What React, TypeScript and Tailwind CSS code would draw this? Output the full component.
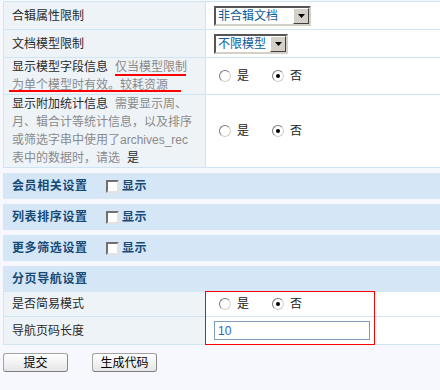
import React from "react";

const Radio = ({ checked }: { checked?: boolean }) => (
  <span className="flex h-[12px] w-[12px] items-center justify-center rounded-full border border-t-[#7a7a7a] border-l-[#7a7a7a] border-r-[#d4d0c8] border-b-[#d4d0c8] bg-white">
    {checked && <span className="h-[4px] w-[4px] rounded-full bg-black" />}
  </span>
);

const YesNo = () => (
  <div className="flex h-full items-center pl-[13px]">
    <Radio />
    <span className="ml-[6px] text-[#222]">是</span>
    <span className="ml-[23px]">
      <Radio checked />
    </span>
    <span className="ml-[6px] text-[#222]">否</span>
  </div>
);

const Select = ({ label, w }: { label: string; w: string }) => (
  <div
    className={`flex h-[20px] ${w} border-2 border-t-[#555] border-l-[#555] border-r-[#d4d0c8] border-b-[#d4d0c8] bg-white`}
  >
    <span className="flex-1 pl-[2px] leading-[16px] text-[#0a5c9c]">{label}</span>
    <span className="flex w-[16px] items-center justify-center border border-t-white border-l-white border-r-[#404040] border-b-[#404040] bg-[#d4d0c8]">
      <svg width="7" height="4" viewBox="0 0 7 4">
        <polygon points="0,0 7,0 3.5,4" fill="#000" />
      </svg>
    </span>
  </div>
);

const Checkbox = () => (
  <span className="inline-block h-[13px] w-[13px] border-2 border-t-[#707070] border-l-[#707070] border-r-[#e2e2e2] border-b-[#e2e2e2] bg-white" />
);

const Section = ({ title, toggle }: { title: string; toggle?: boolean }) => (
  <div className="flex h-[26px] items-center bg-[#d5e6f6] pl-[9px] font-bold text-[#164b78]">
    <span className="w-[94px] tracking-[0.6px]">{title}</span>
    {toggle && (
      <>
        <Checkbox />
        <span className="ml-[3px] tracking-[0.5px]">显示</span>
      </>
    )}
  </div>
);

const Row = ({
  h,
  left,
  right,
  last,
}: {
  h: string;
  left: React.ReactNode;
  right: React.ReactNode;
  last?: boolean;
}) => (
  <div className={`grid grid-cols-[202px_1fr] ${h} ${last ? "" : "border-b border-[#cfe5f5]"}`}>
    <div className="border-r border-[#cfe5f5] bg-[#eef3f8] pl-[8px] text-[#2a2a2a]">{left}</div>
    <div className="bg-white">{right}</div>
  </div>
);

const Btn = ({ label }: { label: string }) => (
  <button className="h-[19px] w-[65px] rounded-[3px] border border-[#a3a3a3] border-b-[#7d7d7d] border-r-[#8a8a8a] bg-gradient-to-b from-white to-[#e6e6e6] text-[12px] leading-[16px] text-black">
    {label}
  </button>
);

export default function App() {
  return (
    <div className="relative h-[390px] w-[440px] overflow-hidden bg-[#f7f8fd] font-[family-name:'Liberation_Sans','Noto_Sans_CJK_SC',sans-serif] text-[12px] leading-[18px]">
      <div className="w-[480px] pl-[3px] pt-[1px]">
        <div className="border border-[#cfe5f5]">
          <Row
            h="h-[28px]"
            left={<div className="flex h-full items-center">合辑属性限制</div>}
            right={
              <div className="flex h-full items-center pl-[8px]">
                <Select label="非合辑文档" w="w-[97px]" />
              </div>
            }
          />
          <Row
            h="h-[28px]"
            left={<div className="flex h-full items-center">文档模型限制</div>}
            right={
              <div className="flex h-full items-center pl-[8px]">
                <Select label="不限模型" w="w-[74px]" />
              </div>
            }
          />
          <Row
            h="h-[37px]"
            left={
              <div className="whitespace-nowrap">
                显示模型字段信息
                <span className="ml-[7px] text-[#8a8a8a]">仅当模型限制</span>
                <br />
                <span className="text-[#8a8a8a]">为单个模型时有效。较耗资源</span>
              </div>
            }
            right={<YesNo />}
          />
          <Row
            h="h-[72px]"
            last
            left={
              <div className="whitespace-nowrap">
                显示附加统计信息
                <span className="ml-[7px] text-[#8a8a8a]">需要显示周、</span>
                <br />
                <span className="text-[#8a8a8a]">月、辑合计等统计信息，以及排序</span>
                <br />
                <span className="text-[#8a8a8a]">或筛选字串中使用了archives_rec</span>
                <br />
                <span className="text-[#8a8a8a]">表中的数据时，请选</span>
                <span className="ml-[7px]">是</span>
              </div>
            }
            right={<YesNo />}
          />
        </div>

        <div className="mt-[5px] flex flex-col gap-[5px]">
          <Section title="会员相关设置" toggle />
          <Section title="列表排序设置" toggle />
          <Section title="更多筛选设置" toggle />
          <Section title="分页导航设置" />
        </div>

        <div className="border-b border-l border-[#cfe5f5]">
          <Row
            h="h-[25px]"
            left={<div className="flex h-full items-center">是否简易模式</div>}
            right={<YesNo />}
          />
          <Row
            h="h-[27px]"
            last
            left={<div className="flex h-full items-center">导航页码长度</div>}
            right={
              <div className="flex h-full items-center pl-[8px]">
                <input
                  defaultValue="10"
                  className="h-[19px] w-[156px] border border-[#7f9db9] bg-white px-[3px] text-[12px] text-[#2a5fc9] outline-none"
                />
              </div>
            }
          />
        </div>

        <div className="mt-[8px] flex gap-[24px]">
          <Btn label="提交" />
          <Btn label="生成代码" />
        </div>
      </div>

      {/* annotation marks */}
      <div className="absolute left-[115px] top-[74px] h-[2px] w-[71px] bg-[#f00]" />
      <div className="absolute left-[9px] top-[90px] h-[2px] w-[172px] bg-[#f00]" />
      <div className="absolute left-[205px] top-[291px] h-[54px] w-[170px] border border-[#f00]" />
    </div>
  );
}
